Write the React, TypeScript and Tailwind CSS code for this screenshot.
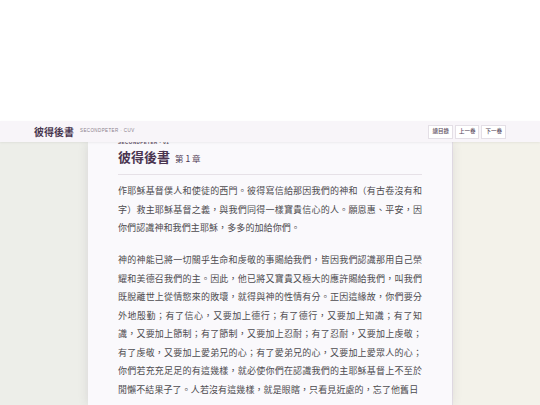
import React from 'react';

const cjk = { fontFamily: '"Noto Sans CJK TC", "Noto Sans", sans-serif' };

const para1 =
  '作耶穌基督僕人和使徒的西門。彼得寫信給那因我們的神和（有古卷沒有和字）救主耶穌基督之義，與我們同得一樣寶貴信心的人。願恩惠、平安，因你們認識神和我們主耶穌，多多的加給你們。';

const para2 =
  '神的神能已將一切關乎生命和虔敬的事賜給我們，皆因我們認識那用自己榮耀和美德召我們的主。因此，他已將又寶貴又極大的應許賜給我們，叫我們既脫離世上從情慾來的敗壞，就得與神的性情有分。正因這緣故，你們要分外地殷勤；有了信心，又要加上德行；有了德行，又要加上知識；有了知識，又要加上節制；有了節制，又要加上忍耐；有了忍耐，又要加上虔敬；有了虔敬，又要加上愛弟兄的心；有了愛弟兄的心，又要加上愛眾人的心；你們若充充足足的有這幾樣，就必使你們在認識我們的主耶穌基督上不至於閒懶不結果子了。人若沒有這幾樣，就是眼瞎，只看見近處的，忘了他舊日';

export default function App() {
    return (
        <div className="w-[540px] h-[405px] overflow-hidden bg-white flex flex-col" style={cjk}>
            {/* blank top */}
            <div className="h-[121px] shrink-0 bg-white"></div>

            {/* Header */}
            <header className="h-[21px] shrink-0 bg-[#f8f5f9] flex items-center justify-between pl-[34px] pr-[34px] relative z-10 shadow-[0_1px_2px_rgba(0,0,0,0.06)]">
                <div className="flex items-center gap-[6px]">
                    <span className="text-[10px] font-bold text-[#4a3850] leading-none">彼得後書</span>
                    <span className="text-[4.5px] tracking-[0.4px] text-[#8a7f8c] leading-none" style={{ fontFamily: '"Liberation Sans", sans-serif' }}>
                        SECONDPETER · CUV
                    </span>
                </div>
                <div className="flex items-center gap-[2px]">
                    <button className="h-[14px] px-[3px] border border-[#e4dfe6] bg-white text-[5.5px] font-medium text-[#5b4c5e] leading-none">總目錄</button>
                    <button className="h-[14px] px-[3px] border border-[#e4dfe6] bg-white text-[5.5px] font-medium text-[#5b4c5e] leading-none">上一卷</button>
                    <button className="h-[14px] px-[3px] border border-[#e4dfe6] bg-white text-[5.5px] font-medium text-[#5b4c5e] leading-none">下一卷</button>
                </div>
            </header>

            {/* Main */}
            <main className="flex-1 flex overflow-hidden">
                <div className="flex-1 bg-[#edeee9]"></div>
                <article className="w-[364px] shrink-0 bg-[#faf9fc] px-[30px] shadow-[0_0_10px_rgba(60,50,70,0.12),1px_0_0_#e8e3ea] relative">
                    <p className="-mt-[2px] text-[4.5px] font-bold tracking-[0.5px] text-[#5e4f62] leading-[6px]" style={{ fontFamily: '"Liberation Sans", sans-serif' }}>
                        SECONDPETER · 01
                    </p>
                    <h1 className="mt-[3px] flex items-baseline gap-[5px] text-[#4a3550] leading-[16px]">
                        <span className="text-[13px] font-bold">彼得後書</span>
                        <span className="text-[8.5px]">第 1 章</span>
                    </h1>
                    <div className="mt-[8px] h-px bg-[#e6e1e7]"></div>
                    <div className="mt-[7px] text-[9px] tracking-[0.1px] leading-[18.5px] text-[#4d4b4f] text-justify">
                        <p>{para1}</p>
                        <p className="mt-[13.5px]">{para2}</p>
                    </div>
                </article>
                <div className="flex-1 bg-[#f3f2ea]"></div>
            </main>
        </div>
    );
}
